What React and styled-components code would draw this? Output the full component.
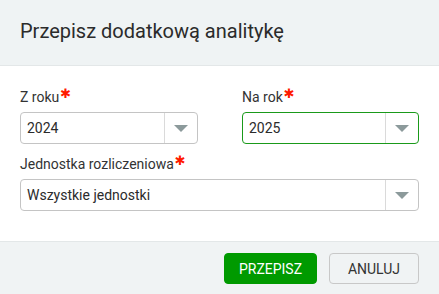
import React from "react";
import styled, { createGlobalStyle } from "styled-components";

const Global = createGlobalStyle`
  html, body { margin: 0; padding: 0; background: #ffffff; }
  body { font-family: Roboto, "Liberation Sans", sans-serif; color: #333; }
  * { box-sizing: border-box; }
`;

const Modal = styled.div`
  width: 439px;
  height: 294px;
  display: flex;
  flex-direction: column;
  background: #fff;
`;

const Header = styled.div`
  height: 66px;
  flex: none;
  background: #eff3f4;
  border-bottom: 1px solid #e3e7e8;
  display: flex;
  align-items: center;
  padding: 0 20px 3px;
`;

const Title = styled.h1`
  margin: 0;
  font-size: 20px;
  font-weight: 400;
  color: #2b2b2b;
  letter-spacing: 0;
`;

const Body = styled.div`
  flex: 1;
  padding: 22px 20px 0 20px;
  display: flex;
  flex-direction: column;
  gap: 11px;
`;

const Row = styled.div`
  display: grid;
  grid-template-columns: 178px 177px;
  column-gap: 44px;
`;

const Field = styled.div`
  display: flex;
  flex-direction: column;
`;

const Label = styled.label`
  font-size: 14px;
  color: #333;
  height: 18px;
  line-height: 18px;
  margin-bottom: 6px;
  display: flex;
  align-items: flex-start;
`;

const Star = styled.span`
  color: #ff1a00;
  font-family: "DejaVu Sans", sans-serif;
  font-size: 13px;
  line-height: 13px;
  margin-top: -1px;
  margin-left: 1px;
  font-weight: bold;
`;

const SelectBox = styled.div`
  height: 32px;
  border: 1px solid ${(p) => (p.$active ? "#1a9a1a" : "#c4c4c4")};
  border-radius: 4px;
  display: flex;
  background: #fff;
`;

const Value = styled.div`
  flex: 1;
  padding-left: 6px;
  font-size: 14px;
  line-height: 30px;
  color: #2b2b2b;
`;

const ArrowCell = styled.div`
  width: 33px;
  border-left: 1px solid #dadada;
  display: flex;
  align-items: center;
  justify-content: center;
`;

const Footer = styled.div`
  height: 53px;
  flex: none;
  background: #f0f3f4;
  border-top: 1px solid #e3e7e8;
  display: flex;
  justify-content: flex-end;
  align-items: flex-start;
  padding: 11px 20px 0 0;
  gap: 12px;
`;

const Button = styled.button`
  height: 31px;
  width: ${(p) => (p.$primary ? "93px" : "90px")};
  border-radius: 4px;
  font-family: Roboto, "Liberation Sans", sans-serif;
  font-size: 14px;
  font-weight: 400;
  text-transform: uppercase;
  cursor: pointer;
  background: ${(p) => (p.$primary ? "#009a00" : "#f0f3f4")};
  color: ${(p) => (p.$primary ? "#ffffff" : "#333")};
  border: 1px solid ${(p) => (p.$primary ? "#009a00" : "#c8c8c8")};
  padding: 0;
`;

const Arrow = () => (
  <svg width="14" height="7" viewBox="0 0 14 7">
    <path d="M0 0 H14 L7 7 Z" fill="#8c9a9b" />
  </svg>
);

const Select = ({ value, active }) => (
  <SelectBox $active={active}>
    <Value>{value}</Value>
    <ArrowCell>
      <Arrow />
    </ArrowCell>
  </SelectBox>
);

export default function App() {
  return (
    <>
      <Global />
      <Modal>
        <Header>
          <Title>Przepisz dodatkową analitykę</Title>
        </Header>
        <Body>
          <Row>
            <Field>
              <Label>
                Z roku<Star>✱</Star>
              </Label>
              <Select value="2024" />
            </Field>
            <Field>
              <Label>
                Na rok<Star>✱</Star>
              </Label>
              <Select value="2025" active />
            </Field>
          </Row>
          <Field>
            <Label>
              Jednostka rozliczeniowa<Star>✱</Star>
            </Label>
            <Select value="Wszystkie jednostki" />
          </Field>
        </Body>
        <Footer>
          <Button $primary>Przepisz</Button>
          <Button>Anuluj</Button>
        </Footer>
      </Modal>
    </>
  );
}
